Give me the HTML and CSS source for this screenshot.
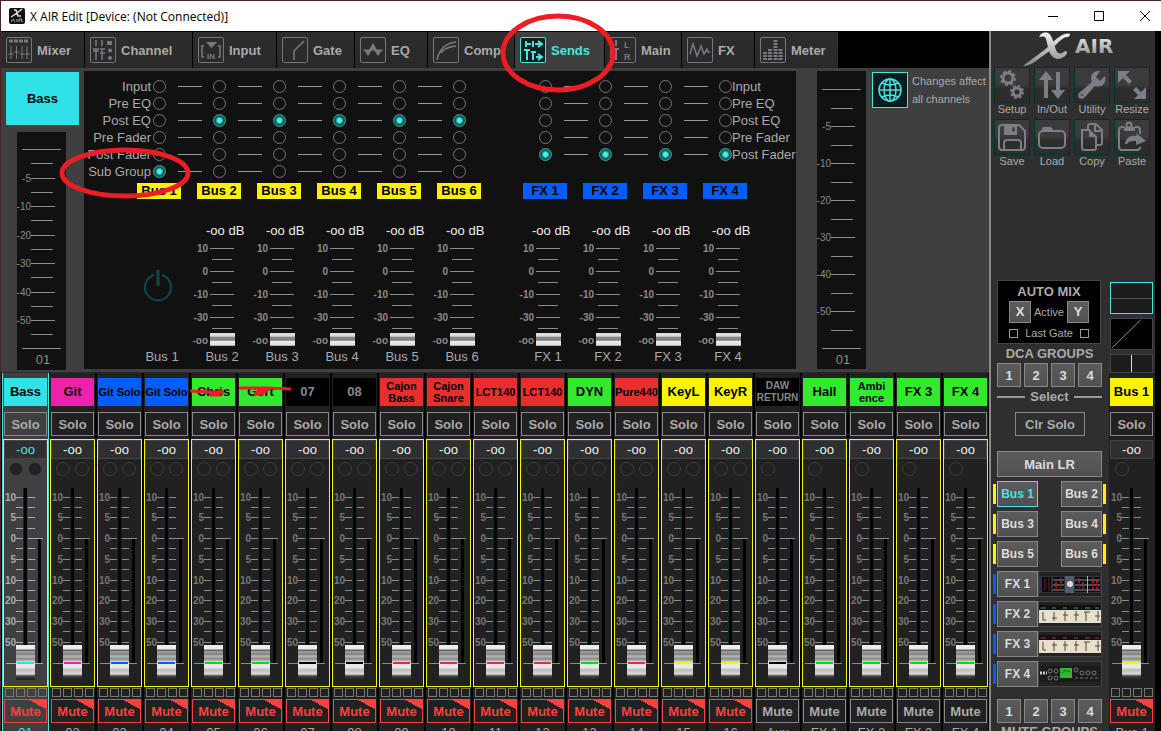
FILE: index.html
```html
<!DOCTYPE html>
<html lang="en">

<head>
    <meta charset="UTF-8">
    <meta name="viewport" content="width=device-width, initial-scale=1.0">
    <title>X AIR Edit</title>
    <link rel="stylesheet" href="styles.css">
</head>

<body>
    <header class="titlebar">
        <svg class="app-icon" width="16" height="16" viewBox="0 0 16 16">
            <rect width="16" height="16" rx="2" fill="#111" />
            <path d="M2 9L8 5 13 1M5 2h2l2 6h3" stroke="#ddd" stroke-width="1.5" fill="none" />
            <path d="M2 14l2-3 2 3M8 11v3M10 14v-3h3l-1 2 2 1" stroke="#aaa" fill="none" />
        </svg>
        <h1>X AIR Edit [Device: (Not Connected)]</h1>
        <div class="window-buttons">
            <button aria-label="Minimize"><svg width="12" height="12"><path d="M1 6.500h10" /></svg></button>
            <button aria-label="Maximize"><svg width="12" height="12"><path d="M1.500 1.500h9v9h-9z" /></svg></button>
            <button aria-label="Close"><svg width="12" height="12"><path d="M1 1l10 10M11 1L1 11" /></svg></button>
        </div>
    </header>

    <div class="app">
        <main class="main">
            <nav class="tabs">
                <button class="tab w84"><svg class="ico" viewBox="1 1 24 24"><path d="M3 4h4M8 4h4M13 4h4M18 4h4" stroke-width="3" /><path d="M5 9v13M10.500 9v13M16 9v13M21 9v13M2.500 17h5M8 15h5M13.500 17h5M19 17h5" /></svg>Mixer</button>
                <button class="tab w108"><svg class="ico" viewBox="1 1 24 24"><path d="M6 3v6M12 3v6M3 12h6M10 12h5M6 12v11M12 12v11M3 14h6M10 16h5" stroke-width="1.500" /><path d="M17 4h5v4h-5z" class="fill" /><circle cx="20" cy="13.500" r="2" class="fill" /><circle cx="20" cy="21" r="2" class="fill" /></svg>Channel</button>
                <button class="tab w84"><svg class="ico" viewBox="1 1 24 24"><path d="M8 5h11l-5.500 6z" class="fill" /><path d="M6 9H4v11h2M20 9h2v11h-2" stroke-width="1.500" /><text x="9" y="22" font-size="8">IN</text></svg>Input</button>
                <button class="tab w78"><svg class="ico" viewBox="1 1 24 24"><path d="M12 23v-9L22 4" stroke-width="1.500" /></svg>Gate</button>
                <button class="tab w73"><svg class="ico" viewBox="1 1 24 24"><path d="M3 13h6l4-7 4 7h6M4 13l4 6 4-6M14 13l4 6 4-6" class="fill" /><path d="M3 13h20" /></svg>EQ</button>
                <button class="tab w87"><svg class="ico" viewBox="1 1 24 24"><path d="M4 23Q7 7 23 5M8 16Q12 10 23 9" stroke-width="1.500" /></svg>Comp</button>
                <button class="tab w90 active"><svg class="ico" viewBox="1 1 24 24"><path d="M6 4v6M7 7h4M13 4v6M15 7h7M18 4l4 3-4 3M4 13h6M7 13v10M11 15h5M13 15v8M16 20h6M18 17l4 3-4 3" stroke-width="2" /></svg>Sends</button>
                <button class="tab w77"><svg class="ico" viewBox="1 1 24 24"><path d="M6 3v6M3 12h6M6 12v11" stroke-width="2" /><text x="14" y="11" font-size="9">L</text><text x="14" y="23" font-size="9">R</text></svg>Main</button>
                <button class="tab w73"><svg class="ico" viewBox="1 1 24 24"><path d="M3 17l3-10 4 12 4-10 3 8 3-5 1 3h2" stroke-width="1.500" /></svg>FX</button>
                <button class="tab w84"><svg class="ico" viewBox="1 1 24 24"><g stroke-width="4" stroke-dasharray="2 1"><path d="M5 23v-9M10 23v-12M15.500 23V3M20.500 23v-12" /></g></svg>Meter</button>
            </nav>

            <section class="panel">
                <div class="panel-left">
                    <button class="channel-name">Bass</button>
                    <div class="meter" id="meterIn"></div>
                </div>
                <div class="sends">
                    <div id="taps"></div>
                    <div class="tags" id="tags"></div>
                    <div class="levels" id="levels"></div>
                </div>
                <div class="meter" id="meterOut"></div>
                <div class="affect">
                    <button class="globe" aria-label="Changes affect all channels">
                        <svg width="26" height="26" viewBox="0 0 26 26"><circle cx="13" cy="13" r="11" /><ellipse cx="13" cy="13" rx="6" ry="11" /><path d="M13 2v22M2 13h22M5 6q8 4 16 0M5 20q8-4 16 0" /></svg>
                    </button>
                    <p>Changes affect<br>all channels</p>
                </div>
            </section>

            <section class="strips" id="strips"></section>
        </main>

        <aside class="side">
            <div class="side-top">
                <svg class="logo" width="164" height="36" viewBox="0 0 164 36">
                    <defs>
                        <linearGradient id="chrome" x1="0" y1="0" x2="0" y2="1">
                            <stop offset="0" stop-color="#f4f4f4" />
                            <stop offset="1" stop-color="#858585" />
                        </linearGradient>
                    </defs>
                    <path d="M32 35C43 26 52 21 59 14 67 6 74 1 79 3c0 2-2 4-4 3C69 8 63 17 56 22 47 28 41 35 32 35zM50 3c6-3 9-1 11 4l4 12c2 5 6 4 9 1 2 0 3 2 1 4-7 7-14 4-17-4L55 8c-1-3-3-3-7-2z" fill="url(#chrome)" />
                    <text x="84" y="22" fill="url(#chrome)">AIR</text>
                </svg>
                <div class="tools">
                    <div class="tool"><button aria-label="Setup"><svg viewBox="0 0 34 34"><circle cx="13" cy="10" r="5" stroke-width="3" /><circle cx="13" cy="10" r="7" stroke-width="2" stroke-dasharray="3 2.500" /><circle cx="22" cy="24" r="4" stroke-width="3" /><circle cx="22" cy="24" r="6" stroke-width="2" stroke-dasharray="2.500 2.200" /></svg></button><span>Setup</span></div>
                    <div class="tool"><button aria-label="In/Out"><svg viewBox="0 0 34 34"><path d="M11 3l7 9h-5v18H9V12H4zM23 31l-7-9h5V4h4v18h5z" class="fill" /></svg></button><span>In/Out</span></div>
                    <div class="tool"><button aria-label="Utility"><svg viewBox="0 0 34 34"><path d="M25 3c-7-1-11 5-8 11L4 25c-3 5 3 8 6 4l10-11c7 2 12-3 10-10l-5 5-4-4z" class="fill" /><circle cx="7" cy="27" r="1.500" fill="#333" /></svg></button><span>Utility</span></div>
                    <div class="tool"><button aria-label="Resize"><svg viewBox="0 0 34 34"><path d="M3 3h12l-4 4 6 6-3 3-6-6-5 5zM31 31H19l4-4-5-5 3-3 5 5 5-5z" class="fill" /></svg></button><span>Resize</span></div>
                    <div class="tool"><button aria-label="Save"><svg viewBox="0 0 34 34"><path d="M7 5h17l6 6v16q0 3-3 3H7q-3 0-3-3V8q0-3 3-3zM9 29v-6q0-3 3-3h11q3 0 3 3v6" stroke-width="2" /><path d="M9 5h13v10H9z" class="fill" /><path d="M17 7h3v5h-3z" fill="#333" /></svg></button><span>Save</span></div>
                    <div class="tool"><button aria-label="Load"><svg viewBox="0 0 34 34"><path d="M6 11l2-4h8l3 4z" class="fill" /><rect x="4" y="11" width="26" height="17" rx="4" stroke-width="2" /></svg></button><span>Load</span></div>
                    <div class="tool"><button aria-label="Copy"><svg viewBox="0 0 34 34"><path d="M7 10h7l7 7v11q0 2-2 2H9q-2 0-2-2zM13 9V6q0-2 2-2h6l6 6v13q0 2-2 2h-3M20 4v7h7" stroke-width="2" /><path d="M14 10v7h7z" class="fill" /></svg></button><span>Copy</span></div>
                    <div class="tool"><button aria-label="Paste"><svg viewBox="0 0 34 34"><path d="M9 7H7q-3 0-3 3v17q0 3 3 3h15q3 0 3-3M20 7h2q3 0 3 3v4" stroke-width="2" /><circle cx="14" cy="5" r="2.500" stroke-width="2" /><path d="M9 7h11v4H9zM10 24c1-7 6-9 12-8l-1-3 10 8-10 4v-4c-5 0-7 0-9 3z" class="fill" /></svg></button><span>Paste</span></div>
                </div>
            </div>

            <div class="side-bottom">
                <div class="groups">
                    <div class="automix">
                        <h2>AUTO MIX</h2>
                        <div class="automix-row"><button class="btn">X</button><span>Active</span><button class="btn">Y</button></div>
                        <div class="automix-row"><input type="checkbox" id="gateX"><label for="gateX">Last Gate</label><input type="checkbox" aria-label="Last Gate Y"></div>
                    </div>
                    <h2>DCA GROUPS</h2>
                    <div class="numbers"><button class="btn">1</button><button class="btn">2</button><button class="btn">3</button><button class="btn">4</button></div>
                    <h2 class="select">Select</h2>
                    <button class="btn clear">Clr Solo</button>
                    <button class="btn main-lr">Main LR</button>
                    <div class="pair"><button class="btn on">Bus 1</button><button class="btn">Bus 2</button></div>
                    <div class="pair"><button class="btn">Bus 3</button><button class="btn">Bus 4</button></div>
                    <div class="pair"><button class="btn">Bus 5</button><button class="btn">Bus 6</button></div>
                    <div class="fx"><button class="btn">FX 1</button>
                        <svg viewBox="0 0 64 26"><rect x="1" y="5" width="62" height="17" fill="#30333f" /><path d="M4 6h9v15H4zM15 6h11v15H15zM37 6h25v15H37z" fill="#0b0b10" /><path d="M7 7v13M11 7v13" stroke="#6b2020" /><path d="M15 9h11M15 14h11M15 19h11M37 9h25M37 14h25M37 19h25" stroke="#888da0" /><path d="M18 11v9M23 7v10M41 7v10M45 11v9M55 7v12M59 10v9" stroke="#b01818" stroke-width="2" stroke-dasharray="2 1" /><path d="M49.500 5v17" stroke="#aaa" /><rect x="27" y="5" width="9" height="17" fill="#55596a" /><circle cx="32" cy="13" r="3" fill="#ddd" /></svg>
                    </div>
                    <div class="fx"><button class="btn">FX 2</button>
                        <svg viewBox="0 0 64 26"><rect x="1" y="4" width="62" height="18" fill="#e9e0cc" /><rect x="1" y="4" width="62" height="5" fill="#111" /><path d="M3 7h5M14 7h4M25 7h4M36 7h4M47 7h5M57 7h4" stroke="#2a9a96" /><path d="M5 11v8h3M16 11v9M27 10v10M38 10v10M48 11v9M60 10v10M14 17h5M25 14h5M36 14h5M46 11h6M57 15h5" stroke="#4a4640" fill="none" /></svg>
                    </div>
                    <div class="fx"><button class="btn">FX 3</button>
                        <svg viewBox="0 0 64 26"><rect x="1" y="4" width="62" height="18" fill="#e9e0cc" /><rect x="1" y="4" width="62" height="5" fill="#111" /><path d="M3 7h5M14 7h4M25 7h4M36 7h4M47 7h5M57 7h4" stroke="#b03030" /><path d="M5 11v8h3M16 11v9M27 10v10M38 10v10M48 11v9M60 10v10M14 14h5M25 14h5M36 14h5M46 11h6M57 15h5" stroke="#4a4640" fill="none" /></svg>
                    </div>
                    <div class="fx"><button class="btn">FX 4</button>
                        <svg viewBox="0 0 64 26"><rect x="1" y="5" width="62" height="16" fill="#1b1b1b" /><rect x="22" y="7" width="12" height="10" fill="#34b434" /><path d="M24 12q3-4 8-1" stroke="#0f6a1a" fill="none" /><path d="M2 12h7" stroke="#ccc" stroke-width="3" stroke-dasharray="2 1" /><g fill="none" stroke="#777"><circle cx="12" cy="10" r="2" /><circle cx="18" cy="10" r="2" /><circle cx="12" cy="17" r="2" /><circle cx="18" cy="17" r="2" /><circle cx="38" cy="9" r="2" /><circle cx="44" cy="12" r="2" /><circle cx="50" cy="12" r="2" /><circle cx="56" cy="12" r="2" /><path d="M37 17h24" stroke-dasharray="3 2" /></g></svg>
                    </div>
                    <div class="numbers mute-numbers"><button class="btn">1</button><button class="btn">2</button><button class="btn">3</button><button class="btn">4</button></div>
                    <h2>MUTE GROUPS</h2>
                </div>
                <div class="bus-column">
                    <div class="curve eq"></div>
                    <svg class="curve" viewBox="0 0 43 32" preserveAspectRatio="none"><path d="M1 31L31 1" stroke="#999" /></svg>
                    <div class="curve pan"></div>
                    <div id="busStrip"></div>
                </div>
            </div>
        </aside>
    </div>

    <!-- red pen marks lie over the mixer -->
    <svg class="marks" width="640" height="420" viewBox="0 0 640 420">
        <ellipse cx="558" cy="53" rx="55" ry="37" />
        <ellipse cx="125" cy="173" rx="63" ry="23" />
        <path d="M190 391l19 1h15M239 388h28l24 1" class="thin" />
        <path d="M209 393l13-3-2 6h-10zM258 389h12l-7 6h-9z" class="blot" />
    </svg>

    <script src="script.js"></script>
</body>

</html>
```
FILE: styles.css
```css
* {
    box-sizing: border-box;
}

body {
    margin: 0;
    height: 100vh;
    overflow: hidden;
    display: flex;
    flex-direction: column;
    background: #000;
    border-top: 1px solid #4a2228;
    border-left: 1px solid #4a2228;
    font-family: "Liberation Sans", Arial, sans-serif;
    font-size: 13px;
    color: #aaa;
}

button {
    font: inherit;
    font-weight: bold;
    color: inherit;
    padding: 0;
    border: 0;
    background: none;
}

h2,
p {
    margin: 0;
}

h2 {
    font-size: 13px;
    line-height: 18px;
    text-align: center;
}

svg {
    display: block;
}

/* title bar */
.titlebar {
    flex: none;
    height: 30px;
    display: flex;
    align-items: center;
    padding: 0 10px 0 8px;
    background: #fff;
    color: #000;
}

.titlebar h1 {
    flex: 1;
    margin: 0 0 0 5px;
    font: 12px "Open Sans", "Noto Sans", sans-serif;
}

.window-buttons {
    display: flex;
    gap: 34px;
}

.window-buttons button {
    width: 12px;
    height: 12px;
}

.window-buttons svg {
    fill: none;
    stroke: #000;
}

.app {
    flex: 1;
    display: flex;
    min-height: 0;
    overflow: hidden;
    padding-right: 6px;
}

.main {
    flex: 1;
    min-width: 0;
}

/* tabs */
.tabs {
    height: 37px;
    display: flex;
    padding-top: 1px;
}

.tab {
    display: flex;
    align-items: center;
    gap: 5px;
    padding-left: 5px;
    border-right: 1px solid #000;
    background: linear-gradient(#2d2d2d, #292929);
}

.tab.active {
    background: #3f3f3f;
    color: #45e6dd;
}

.ico {
    width: 26px;
    height: 26px;
    border: 1px solid #777;
    border-radius: 2px;
    fill: none;
    stroke: #777b80;
}

.active .ico {
    border-color: #45e6dd;
    stroke: #45e6dd;
    background: #0d2020;
}

.ico .fill {
    fill: #777b80;
    stroke: none;
}

.ico text {
    fill: #777b80;
    stroke: none;
    font-weight: bold;
}

.w73 { width: 73px; }
.w77 { width: 77px; }
.w78 { width: 78px; }
.w84 { width: 84px; }
.w87 { width: 87px; }
.w90 { width: 90px; }
.w108 { width: 108px; }

/* processing panel */
.panel {
    display: flex;
    height: 305px;
    padding: 3px 0;
    background: #3f3f3f;
    border-bottom: 1px solid #2a2a2a;
}

.panel-left {
    width: 83px;
    padding: 1px 0 0 5px;
}

.channel-name {
    display: block;
    width: 73px;
    height: 53px;
    margin-bottom: 7px;
    background: #2ee2e8;
    color: #000;
}

.meter {
    width: 49px;
    background: #111;
}

.panel-left .meter {
    margin-left: 11px;
}

.scale {
    fill: #8c8c8c;
    shape-rendering: crispEdges;
}

.scale text {
    font-size: 10px;
    text-anchor: end;
    fill: #8c8c8c;
}

.level .scale text,
.strip .scale text {
    font-weight: bold;
}

.scale .caption {
    font-size: 13px;
    text-anchor: middle;
}

.sends {
    width: 712px;
    margin-right: 21px;
    padding-top: 7px;
    background: #111;
}

.tap-row {
    display: flex;
    align-items: center;
    height: 17px;
    white-space: nowrap;
}

.tap-row > * {
    flex: none;
}

.tap-row .from {
    width: 67px;
    margin-right: 2px;
    text-align: right;
}

.tap-row i {
    width: 24px;
    height: 1px;
    margin: 0 11px 0 12px;
    background: #999;
}

.tap-row .space {
    width: 73px;
}

.tap-row input {
    appearance: none;
    width: 13px;
    height: 13px;
    margin: 0;
    border: 1px solid #777;
    border-radius: 50%;
}

.tap-row input:checked {
    border-color: #3aa9a3;
    background: radial-gradient(#45f0e6 0 2px, #145a57 4px);
}

.tags {
    display: flex;
    gap: 16px;
    margin: 3px 0 0 53px;
}

.tag {
    width: 44px;
    height: 16px;
    line-height: 16px;
    background: #fff200;
    color: #000;
    font-weight: bold;
    text-align: center;
}

.tag.blue,
.level.blue {
    margin-left: 26px;
}

.tag.blue {
    background: #005eff;
}

.tag.blue ~ .tag.blue,
.level.blue ~ .level.blue {
    margin-left: 0;
}

.levels {
    display: flex;
    margin: 23px 0 0 46px;
}

.level {
    width: 60px;
}

.level output {
    display: block;
    height: 18px;
    line-height: 18px;
    padding-left: 16px;
    color: #eee;
    white-space: nowrap;
}

.level label {
    display: block;
    line-height: 16px;
    padding-left: 4px;
    text-align: center;
}

.power button {
    display: block;
    width: 56px;
    height: 109px;
    padding-bottom: 18px;
    margin-top: 18px;
    color: #0d4a50;
}

.power button svg {
    margin: 0 auto;
}

.fader {
    display: grid;
}

.fader > * {
    grid-area: 1 / 1;
}

.fader input {
    appearance: none;
    writing-mode: vertical-lr;
    direction: rtl;
    margin: 0;
    background: none;
}

.fader input::-webkit-slider-thumb {
    appearance: none;
}

.level input {
    width: 25px;
    height: 109px;
    margin-left: 20px;
}

.level input::-webkit-slider-thumb {
    width: 25px;
    height: 13px;
    margin-bottom: 3px;
    background: linear-gradient(#ddd 0 3px, #aaa 4px, #555 5px, #bbb 6px, #444 7px, #eee 8px, #ddd 12px, #888);
}

.affect {
    display: flex;
    gap: 4px;
    margin: 1px 0 0 6px;
    font-size: 11px;
    line-height: 18px;
    white-space: nowrap;
}

.globe {
    width: 36px;
    height: 36px;
    border: 1px solid #45e6dd;
    background: #001e20;
}

.globe svg {
    margin: 0 auto;
    fill: none;
    stroke: #45e6dd;
    stroke-width: 1.5;
}

/* channel strips */
.strips {
    display: flex;
    padding-left: 1px;
}

.strip {
    flex: 1;
    min-width: 0;
    padding: 5px 1px 0;
    border-left: 1px solid #000;
    border-right: 1px solid #000;
    background: #212121;
}

.strip.selected {
    border-color: #45e6dd;
    background: #404040;
}

.name {
    display: block;
    width: 43px;
    height: 28px;
    margin-bottom: 6px;
    background: var(--color);
    color: #000;
    line-height: 12px;
    overflow: hidden;
    white-space: pre-line;
}

.name.small {
    font-size: 11px;
}

.name.tiny {
    font-size: 10px;
}

.name.unused {
    color: #888;
}

.solo,
.mute {
    display: block;
    width: 43px;
    height: 24px;
    border: 1px solid #888;
}

.box {
    width: 43px;
    margin-top: 4px;
    outline: 1px solid #fff200;
}

.bus .box {
    outline: 0;
}

.value {
    display: block;
    height: 19px;
    line-height: 17px;
    border: 1px solid #444;
    background: #2d2f31;
    color: #eee;
    text-align: center;
}

.selected .value {
    color: #45e6dd;
}

.lamps {
    display: flex;
    gap: 5px;
    height: 21px;
    padding: 3px 0 0 5px;
}

.lamps i {
    width: 14px;
    height: 14px;
    border: 1px solid #3c3c3c;
    border-radius: 50%;
}

.selected .lamps i {
    background: #222;
}

.strip .scale text {
    fill: #777;
}

.selected .scale,
.selected .scale text {
    fill: #aaa;
}

.strip input {
    width: 19px;
    height: 192px;
    margin: 8px 0 0 12px;
}

.strip input::-webkit-slider-thumb {
    width: 19px;
    height: 35px;
    background:
        linear-gradient(var(--color), var(--color)) 1px 17px / 17px 2px no-repeat,
        linear-gradient(#eee 0 4px, #555 5px, #aaa 7px, #777 9px, #bbb 11px, #888 14px, #ddd 17px, #eee 22px, #bbb 25px, #ddd 29px, #444 31px, #1c1c1c);
}

.assign {
    display: flex;
    gap: 2px;
    height: 9px;
    margin: 2px 0 2px 1px;
}

.assign i {
    width: 9px;
    height: 9px;
    border: 1px solid #777;
}

.mute.on {
    border-color: #ff4040;
    color: #ff4040;
    background: linear-gradient(to bottom left, #ff4040 8px, transparent 8px);
}

.number {
    display: block;
    padding-top: 3px;
    line-height: 14px;
    text-align: center;
}

.selected .number {
    color: #45e6dd;
}

/* right side */
.side {
    width: 166px;
    border-left: 2px solid #8a8a8a;
    background: #2f2f2f;
}

.side-top {
    height: 249px;
}

.logo text {
    font: bold 20px "DejaVu Sans", sans-serif;
}

.tools {
    display: grid;
    grid-template-columns: repeat(4, 36px);
    gap: 0 4px;
    padding-left: 3px;
}

.tool {
    height: 52px;
    font-size: 11px;
    line-height: 13px;
    text-align: center;
}

.tool button {
    display: block;
    width: 36px;
    height: 36px;
    border: 1px solid #003030;
    background: linear-gradient(#3b3b3b 50%, #2d2d2d 60%);
}

.tool svg {
    fill: none;
    stroke: #7b7e84;
}

.tool .fill {
    fill: #7b7e84;
    stroke: none;
}

.side-bottom {
    display: flex;
}

.groups {
    width: 118px;
    padding-left: 6px;
}

.btn {
    height: 26px;
    border: 1px solid #888;
    background: linear-gradient(#5c5c5c, #505050);
    color: #ddd;
}

.btn.on {
    border-color: #45e6dd;
    color: #45e6dd;
}

.automix {
    width: 104px;
    height: 64px;
    margin-bottom: 1px;
    padding: 2px 11px;
    border: 1px solid #444;
    background: #000;
}

.automix-row {
    display: flex;
    align-items: center;
    justify-content: space-between;
    height: 22px;
    font-size: 11px;
    line-height: 18px;
}

.automix-row .btn {
    width: 22px;
    height: 22px;
    font-size: 13px;
}

.automix-row input {
    appearance: none;
    width: 9px;
    height: 9px;
    margin: 0;
    border: 1px solid #999;
}

.automix-row:last-child {
    height: 20px;
}

.groups > h2 {
    width: 105px;
}

.numbers {
    display: flex;
    gap: 3px;
}

.numbers .btn {
    width: 24px;
    height: 24px;
}

.select {
    display: flex;
    align-items: center;
    gap: 5px;
    margin: 1px 0 6px;
}

.select::before,
.select::after {
    content: "";
    flex: 1;
    height: 2px;
    background: #999;
}

.clear {
    display: block;
    width: 70px;
    height: 24px;
    margin: 0 0 15px 18px;
    background: none;
    color: #aaa;
}

.main-lr {
    display: block;
    width: 105px;
    margin-bottom: 4px;
}

.pair {
    display: flex;
    width: 113px;
    margin: 0 0 4px -4px;
}

.pair .btn,
.fx .btn {
    width: 41px;
    font-size: 12px;
}

.pair::before,
.pair::after,
.fx::before {
    content: "";
    width: 3px;
    height: 20px;
    margin: 3px 1px 0 0;
    background: #fff200;
}

.pair::after {
    margin: 3px 0 0 1px;
}

.pair .btn:last-child {
    margin-left: auto;
}

.fx {
    display: flex;
    width: 109px;
    margin: 0 0 4px -4px;
}

.fx::before {
    background: #005eff;
}

.fx svg {
    width: 64px;
    height: 26px;
    background: #222;
    outline: 1px solid #444;
    outline-offset: -1px;
}

.mute-numbers {
    margin-top: 12px;
}

.bus-column {
    width: 46px;
}

.curve {
    display: block;
    width: 43px;
    height: 32px;
    margin: 0 0 4px 1px;
    border: 1px solid #444;
    background: #000;
}

.curve.eq {
    margin-top: 2px;
    border-color: #45e6dd;
    background: linear-gradient(#1c1c1c 15px, #555 15px 16px, #1c1c1c 16px);
}

.curve.pan {
    height: 19px;
    margin-bottom: 0;
    background: linear-gradient(90deg, #1c1c1c 20px, #ddd 20px 21px, #1c1c1c 21px);
}

.strip.bus {
    border: 0;
}

.marks {
    position: absolute;
    left: 0;
    top: 0;
    pointer-events: none;
    fill: none;
    stroke: #ee1c24;
    stroke-width: 5;
}

.marks .thin {
    stroke-width: 3;
}

.marks .blot {
    fill: #ee1c24;
    stroke-width: 1;
}
```
FILE: script.js
```js
// channels: label, colour, number, text size
const channels = [
    ['Bass', '#2ee2e8', '01'],
    ['Git', '#ee22aa', '02'],
    ['Git Solo', '#005eff', '03', 'small'],
    ['Git Solo', '#005eff', '04', 'small'],
    ['Chris', '#33e92e', '05'],
    ['Gert', '#33e92e', '06'],
    ['07', '#000', '07', 'unused'],
    ['08', '#000', '08', 'unused'],
    ['Cajon\nBass', '#e92e2e', '09', 'small'],
    ['Cajon\nSnare', '#e92e2e', '10', 'small'],
    ['LCT140', '#e92e2e', '11', 'small'],
    ['LCT140', '#e92e2e', '12', 'small'],
    ['DYN', '#33e92e', '13'],
    ['Pure440', '#e92e2e', '14', 'small'],
    ['KeyL', '#fff200', '15'],
    ['KeyR', '#fff200', '16'],
    ['DAW\nRETURN', '#000', 'Aux', 'tiny unused'],
    ['Hall', '#33e92e', 'FX 1'],
    ['Ambi\nence', '#33e92e', 'FX 2', 'small'],
    ['FX 3', '#33e92e', 'FX 3'],
    ['FX 4', '#33e92e', 'FX 4']
];

const sends = ['Bus 1', 'Bus 2', 'Bus 3', 'Bus 4', 'Bus 5', 'Bus 6', 'FX 1', 'FX 2', 'FX 3', 'FX 4'];
const taps = ['Input', 'Pre EQ', 'Post EQ', 'Pre Fader', 'Post Fader', 'Sub Group'];

function line(x, y, width) {
    return `<rect x="${x}" y="${y}" width="${width}" height="1" />`;
}

// long fader scale, 10 down to 50
function stripScale() {
    const marks = [['10', 17], ['', 27], ['5', 37], ['', 48], ['0', 58], ['', 68], ['5', 79], ['', 89],
        ['10', 100], ['', 110], ['20', 120], ['', 131], ['30', 141], ['', 151], ['50', 162]];
    let out = '<rect x="19" y="8" width="4" height="180" fill="#000" /><rect x="19" y="8" width="1" height="160" fill="#0c2b2b" />';
    out += '<rect x="34" y="58" width="3" height="125" fill="#000" />';
    for (const [text, y] of marks) {
        out += line(12, y, 7) + line(24, y, text === '0' ? 15 : 7);
        if (text) out += `<text x="12" y="${y + 4}">${text}</text>`;
    }
    out += line(2, 183, 37);
    return `<svg class="scale" width="43" height="206">${out}</svg>`;
}

function strip([name, color, number, size = ''], index) {
    const bus = number === 'Bus 1';
    const muted = index < 16 || bus;
    const fader = color === '#33e92e' ? '#00e000' : color;
    return `<div class="strip ${index === 0 ? 'selected' : ''} ${bus ? 'bus' : ''}" style="--color:${fader}">
        <button class="name ${size}" style="--color:${color}">${name}</button>
        <button class="solo">Solo</button>
        <div class="box">
            <output class="value">-oo</output>
            <div class="lamps"><i></i>${index < 16 ? '<i></i>' : ''}</div>
            <div class="fader">${stripScale()}<input type="range" value="0" aria-label="${number} level"></div>
        </div>
        <div class="assign"><i></i><i></i><i></i><i></i></div>
        <button class="mute ${muted ? 'on' : ''}">Mute</button>
        <span class="number">${number}</span>
    </div>`;
}

document.getElementById('strips').innerHTML = channels.map(strip).join('');
document.getElementById('busStrip').innerHTML = strip(['Bus 1', '#fff200', 'Bus 1'], 30);

// routing matrix
document.getElementById('taps').innerHTML = taps.map((tap, row) => {
    const cells = sends.slice(0, row === 5 ? 6 : 10).map((send, col) => {
        const on = col === 0 ? row === 5 : col < 6 ? row === 2 : row === 4;
        const before = col === 0 ? '' : col === 6 ? '<span class="space"></span>' : '<i></i>';
        const id = `tap${row}_${col}`;
        return `${before}<input type="radio" id="${id}" name="send${col}" aria-label="${send} ${tap}" ${on ? 'checked' : ''}>`;
    });
    const right = row === 5 ? '' : `<label for="tap${row}_9">${tap}</label>`;
    return `<div class="tap-row"><label class="from" for="tap${row}_0">${tap}</label>${cells.join('')}${right}</div>`;
}).join('');

document.getElementById('tags').innerHTML = sends.map((send, i) =>
    `<span class="tag ${i > 5 ? 'blue' : ''}">${send}</span>`).join('');

// small send faders
document.getElementById('levels').innerHTML = sends.map((send, i) => {
    if (i === 0) {
        return `<div class="level power"><button id="send0" aria-label="Bus 1 on"><svg width="32" height="34" viewBox="0 0 32 34" fill="none" stroke="currentColor" stroke-width="2"><path d="M12 6a13 13 0 1 0 8 0" /><path d="M16 1v16" stroke-width="3" /></svg></button><label for="send0">${send}</label></div>`;
    }
    let scale = '';
    [['10', 8], ['0', 31], ['-10', 54], ['-30', 77], ['-oo', 100]].forEach(([text, y]) => {
        scale += `<text x="18" y="${y + 4}">${text}</text>`;
        if (y < 100) scale += line(20, y, 24) + line(22, y + 11, 20);
    });
    return `<div class="level ${i > 5 ? 'blue' : ''}"><output>-oo dB</output>
        <div class="fader"><svg class="scale" width="60" height="109">${scale}</svg><input type="range" id="send${i}" value="0"></div>
        <label for="send${i}">${send}</label></div>`;
}).join('');

function meter(id, height, top, step) {
    let out = line(5, top, 39) + line(5, height - 22, 39);
    const labels = ['-5', '-10', '-20', '-30', '-40', '-50'];
    for (let i = 1; i < 14; i++) {
        const y = Math.round(top + i * step);
        out += line(14, y, i % 2 ? 22 : 24);
        if (i % 2 === 0) out += `<text x="14" y="${y + 4}">${labels[i / 2 - 1]}</text>`;
    }
    out += `<text class="caption" x="26" y="${height - 6}">01</text>`;
    document.getElementById(id).innerHTML = `<svg class="scale" width="49" height="${height}">${out}</svg>`;
}

meter('meterIn', 238, 17, 14.25);
meter('meterOut', 299, 18, 18.5);
```
